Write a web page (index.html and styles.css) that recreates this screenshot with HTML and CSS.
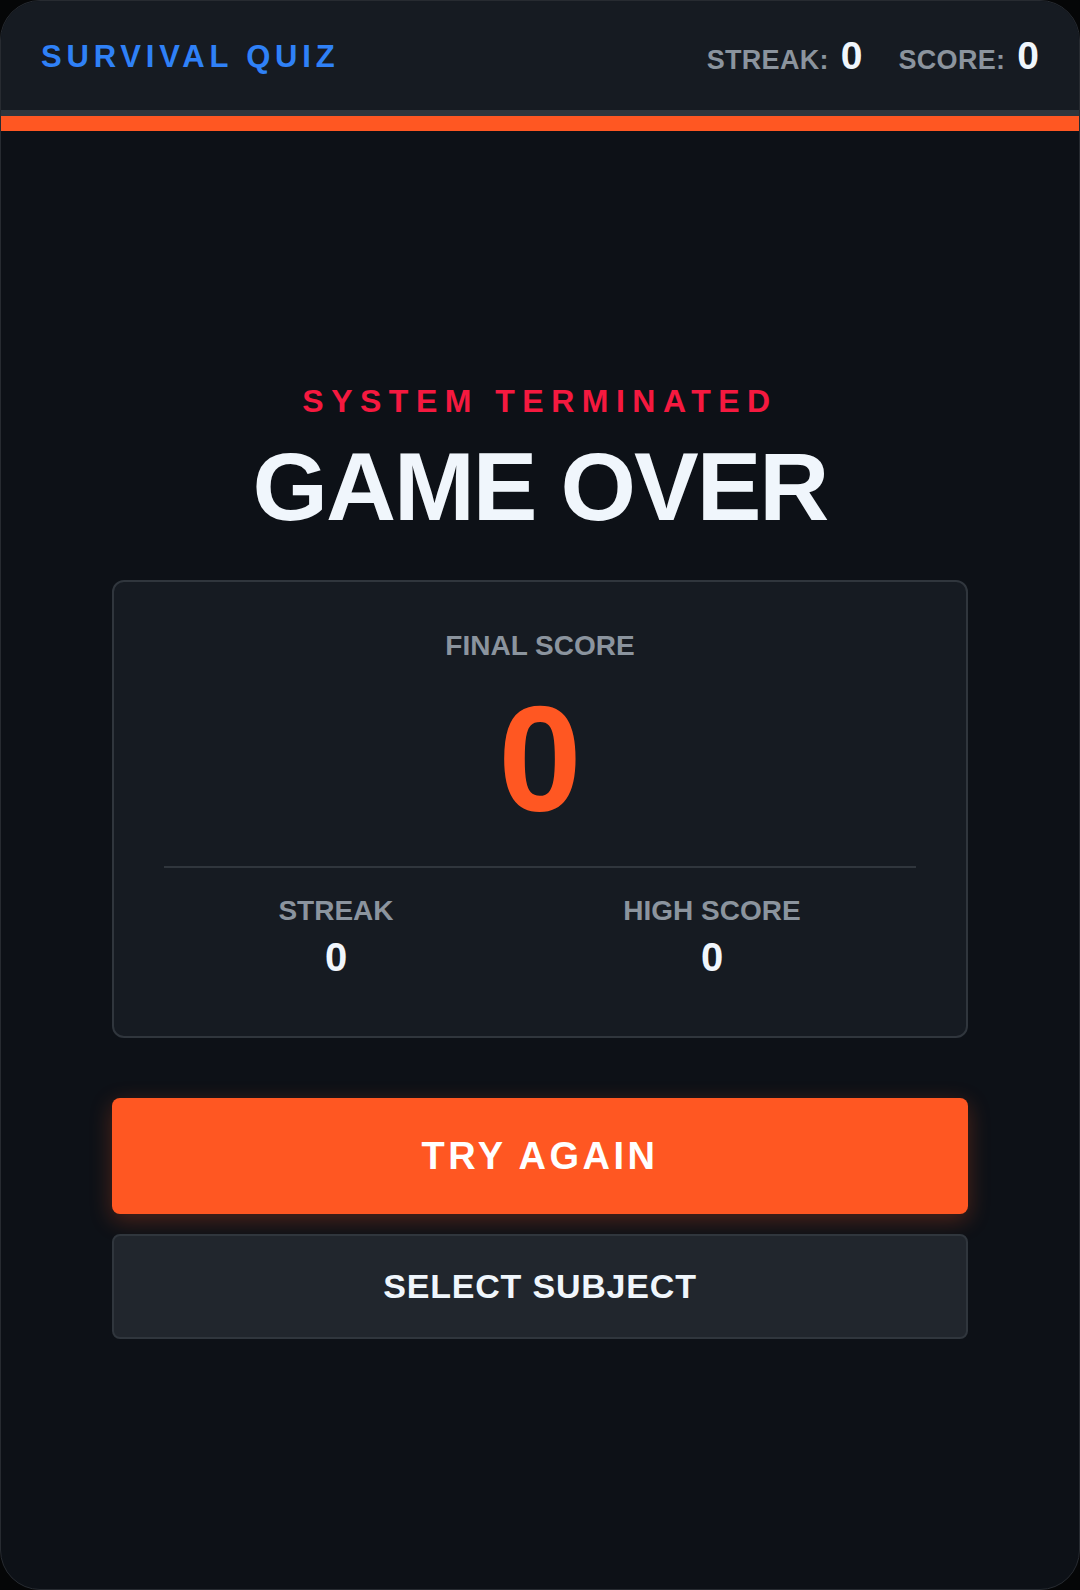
FILE: index.html
```html
<!DOCTYPE html>
<html lang="en">
<head>
<meta charset="utf-8">
<title>Survival Quiz</title>
<link rel="stylesheet" href="styles.css">
</head>
<body>
<div class="app">
  <header class="topbar">
    <div class="brand">SURVIVAL QUIZ</div>
    <div class="hud">
      <div class="hud-item"><span class="hud-label">STREAK:</span><span class="hud-value">0</span></div>
      <div class="hud-item"><span class="hud-label">SCORE:</span><span class="hud-value">0</span></div>
    </div>
  </header>
  <div class="progress"><div class="progress-fill"></div></div>
  <main class="main">
    <div class="over">
      <div class="kicker">SYSTEM TERMINATED</div>
      <h1 class="title">GAME OVER</h1>
      <section class="card">
        <div class="card-label">FINAL SCORE</div>
        <div class="final">0</div>
        <div class="divider"></div>
        <div class="stats">
          <div class="stat">
            <div class="stat-label">STREAK</div>
            <div class="stat-value">0</div>
          </div>
          <div class="stat">
            <div class="stat-label">HIGH SCORE</div>
            <div class="stat-value">0</div>
          </div>
        </div>
      </section>
      <button class="btn btn-primary">TRY AGAIN</button>
      <button class="btn btn-secondary">SELECT SUBJECT</button>
    </div>
  </main>
</div>
</body>
</html>
```

FILE: styles.css
```css
* { box-sizing: border-box; }

html, body {
  margin: 0;
  padding: 0;
  background: #050607;
}

body {
  font-family: "Liberation Sans", Arial, sans-serif;
  font-weight: 700;
}

.app {
  width: 1080px;
  height: 1590px;
  border-radius: 40px;
  border: 1px solid #272b31;
  background: #0d1117;
  overflow: hidden;
  display: flex;
  flex-direction: column;
}

.topbar {
  height: 115px;
  flex: none;
  background: #161b22;
  border-bottom: 6px solid #30363d;
  padding: 0 40px;
  display: flex;
  align-items: center;
  justify-content: space-between;
}

.brand {
  color: #2f81f7;
  font-size: 31px;
  letter-spacing: 4.8px;
  padding-top: 2px;
}

.hud {
  display: flex;
  align-items: baseline;
  gap: 36px;
}

.hud-item {
  display: flex;
  align-items: baseline;
  gap: 12px;
}

.hud-label {
  color: #8b949e;
  font-size: 27px;
  letter-spacing: 0.3px;
}

.hud-value {
  color: #f0f6fc;
  font-size: 39px;
}

.progress {
  height: 15px;
  flex: none;
  background: #30363d;
}

.progress-fill {
  height: 100%;
  width: 100%;
  background: #ff5722;
}

.main {
  flex: 1;
  display: flex;
  align-items: center;
  justify-content: center;
  padding: 2px 111px 0;
}

.over {
  width: 100%;
  display: flex;
  flex-direction: column;
  align-items: stretch;
  text-align: center;
}

.kicker {
  color: #f5193f;
  font-size: 32px;
  letter-spacing: 7.5px;
  line-height: 36px;
}

.title {
  margin: 20px 0 0;
  color: #f0f6fc;
  font-size: 97px;
  line-height: 96px;
  letter-spacing: -2px;
  font-weight: 700;
}

.card {
  margin-top: 45px;
  background: #161b22;
  border: 2px solid #30363d;
  border-radius: 12px;
  padding: 48px 50px 56px;
}

.card-label {
  color: #8b949e;
  font-size: 28px;
  line-height: 32px;
}

.final {
  margin-top: 22px;
  color: #ff5722;
  font-size: 150px;
  line-height: 150px;
}

.divider {
  margin-top: 32px;
  height: 2px;
  background: #30363d;
}

.stats {
  margin: 27px 16px 0 -16px;
  display: grid;
  grid-template-columns: 1fr 1fr;
}

.stat-label {
  color: #8b949e;
  font-size: 28px;
  line-height: 32px;
}

.stat-value {
  margin-top: 7px;
  color: #f0f6fc;
  font-size: 40px;
  line-height: 46px;
}

.btn {
  display: block;
  width: 100%;
  font-family: "Liberation Sans", Arial, sans-serif;
  font-weight: 700;
  text-align: center;
  border-radius: 8px;
  cursor: pointer;
}

.btn-primary {
  margin-top: 60px;
  background: #ff5722;
  color: #ffffff;
  border: none;
  font-size: 38px;
  letter-spacing: 3.5px;
  line-height: 44px;
  padding: 36px 0 36px;
  box-shadow: 0 6px 22px rgba(255, 87, 34, 0.28);
}

.btn-secondary {
  margin-top: 20px;
  background: #21262d;
  color: #f0f6fc;
  border: 2px solid #30363d;
  font-size: 34px;
  letter-spacing: 0.8px;
  line-height: 40px;
  padding: 30px 0 31px;
}
```
